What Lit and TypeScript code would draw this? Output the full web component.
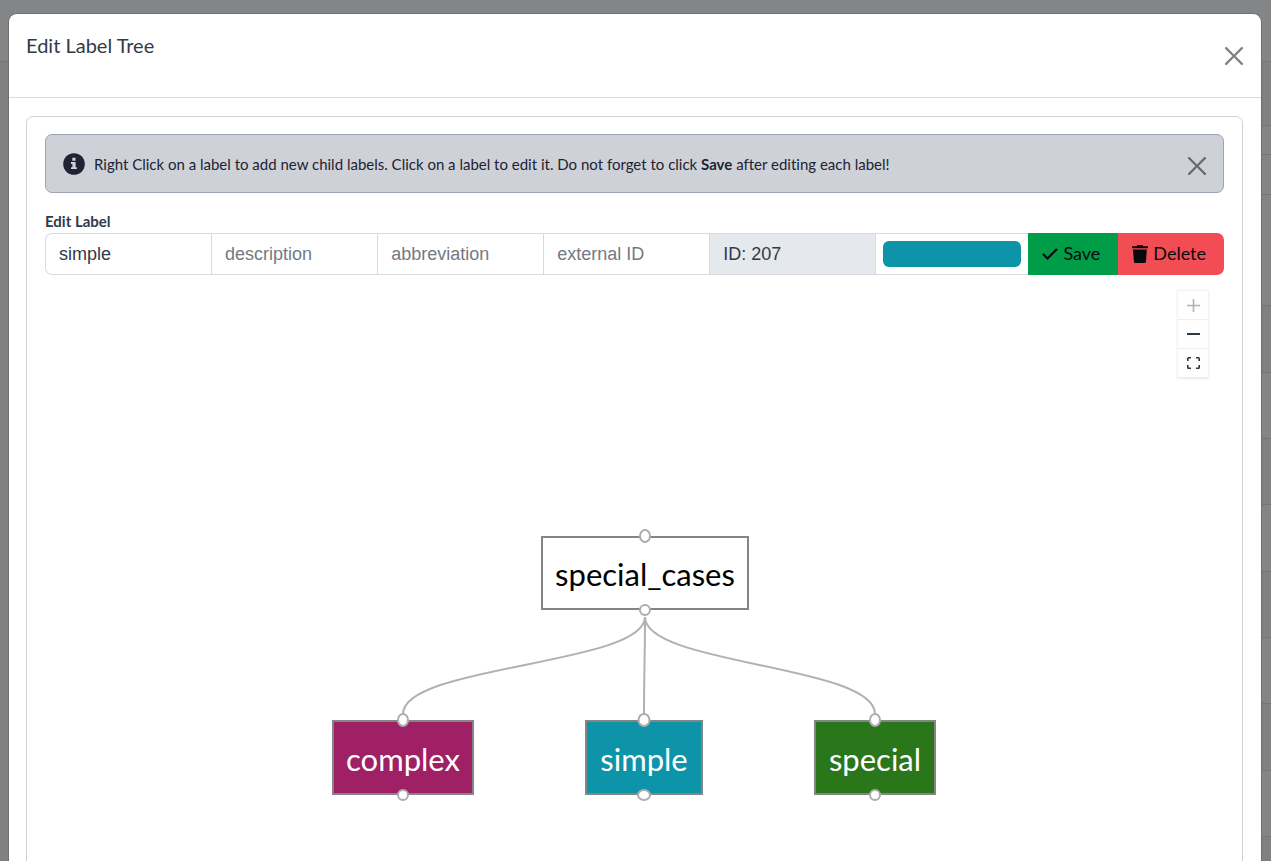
import { LitElement, html, css, svg } from "lit";
import { customElement, state } from "lit/decorators.js";
import { classMap } from "lit/directives/class-map.js";
import { styleMap } from "lit/directives/style-map.js";

interface TreeNode {
  name: string;
  x: number;
  y: number;
  width: number;
  height: number;
  fill: string;
  ink: string;
  topWidth: number;
  bottomWidth: number;
}

const NODES: TreeNode[] = [
  { name: "special_cases", x: 209, y: 0, width: 208, height: 74, fill: "#ffffff", ink: "#000000", topWidth: 12, bottomWidth: 12 },
  { name: "complex", x: 0, y: 184, width: 142, height: 75, fill: "#a02065", ink: "#ffffff", topWidth: 12, bottomWidth: 12 },
  { name: "simple", x: 253, y: 184, width: 118, height: 75, fill: "#0d94a8", ink: "#ffffff", topWidth: 13, bottomWidth: 14 },
  { name: "special", x: 482, y: 184, width: 122, height: 75, fill: "#2a761a", ink: "#ffffff", topWidth: 12, bottomWidth: 12 },
];

const closeIcon = html`<svg viewBox="0 0 16 16" width="18" height="18" aria-hidden="true">
  <path fill="currentColor" d="M.293.293a1 1 0 0 1 1.414 0L8 6.586 14.293.293a1 1 0 1 1 1.414 1.414L9.414 8l6.293 6.293a1 1 0 0 1-1.414 1.414L8 9.414l-6.293 6.293a1 1 0 0 1-1.414-1.414L6.586 8 .293 1.707a1 1 0 0 1 0-1.414z"/>
</svg>`;

@customElement("label-tree")
export class LabelTree extends LitElement {
  static styles = css`
    :host {
      display: flex;
      align-items: center;
      justify-content: center;
      position: relative;
      height: 781px;
    }
    .controls {
      position: absolute;
      top: 16px;
      right: 16px;
      display: flex;
      flex-direction: column;
      box-shadow: 0 0 2px 1px rgba(0, 0, 0, 0.08);
    }
    .control {
      display: flex;
      align-items: center;
      justify-content: center;
      box-sizing: border-box;
      width: 30px;
      height: 29px;
      padding: 0;
      border: 0;
      border-bottom: 1px solid #eeeeee;
      background: #fefefe;
      color: #2c3844;
    }
    .control:disabled {
      color: #b0b2b5;
    }
    .stage {
      position: relative;
      flex: none;
      width: 605px;
      height: 259px;
    }
    .edges {
      position: absolute;
      inset: 0;
      overflow: visible;
    }
    .edge {
      fill: none;
      stroke: #b1b1b5;
      stroke-width: 2;
    }
    .node {
      position: absolute;
      display: flex;
      align-items: center;
      justify-content: center;
      box-sizing: border-box;
      padding-top: 2px;
      border: 2px solid #858585;
      font: 31px/40px Lato, sans-serif;
    }
    .handle {
      position: absolute;
      left: 50%;
      box-sizing: border-box;
      border: 2px solid #adadad;
      border-radius: 50%;
      background: #ffffff;
      transform: translate(-50%, -50%);
    }
    .top {
      top: -2px;
      height: 14px;
    }
    .bottom {
      top: calc(100% + 2px);
      height: 12px;
    }
  `;

  private edge(child: TreeNode) {
    const x1 = 313;
    const x2 = child.x + child.width / 2;
    return svg`<path class="edge" d="M${x1} 81 C${x1} 129 ${x2} 129 ${x2} 178" />`;
  }

  render() {
    return html`
      <div class="controls">
        <button class="control" aria-label="Zoom in" disabled>
          <svg width="13" height="13" viewBox="0 0 13 13"><path d="M6.5 0v13M0 6.5h13" stroke="currentColor" stroke-width="1.6" /></svg>
        </button>
        <button class="control" aria-label="Zoom out">
          <svg width="13" height="13" viewBox="0 0 13 13"><path d="M0 6h13" stroke="currentColor" stroke-width="2" /></svg>
        </button>
        <button class="control" aria-label="Fit view">
          <svg width="13" height="12" viewBox="0 0 13 12"><path d="M4 .8H1.6Q.8.8.8 1.6V4M9 .8h2.4q.8 0 .8.8V4M4 11.2H1.6q-.8 0-.8-.8V8M9 11.2h2.4q.8 0 .8-.8V8" fill="none" stroke="currentColor" stroke-width="1.6" /></svg>
        </button>
      </div>
      <div class="stage">
        <svg class="edges" width="605" height="259" viewBox="0 0 605 259">${NODES.slice(1).map((n) => this.edge(n))}</svg>
        ${NODES.map(
          (n) => html`<div
            class="node"
            style=${styleMap({ left: `${n.x}px`, top: `${n.y}px`, width: `${n.width}px`, height: `${n.height}px`, background: n.fill, color: n.ink })}
          >
            <span>${n.name}</span>
            <span class="handle top" style=${styleMap({ width: `${n.topWidth}px` })}></span>
            <span class="handle bottom" style=${styleMap({ width: `${n.bottomWidth}px` })}></span>
          </div>`
        )}
      </div>
    `;
  }
}

@customElement("app-root")
export class AppRoot extends LitElement {
  @state() private noticeOpen = true;

  private bands = [62, 64, 29, 40, 111, 67, 66, 66, 67, 66, 66, 67, 66, 66];

  static styles = css`
    :host {
      display: grid;
      height: 100vh;
      overflow: hidden;
      background: #7f8081;
      color: #323a49;
      font: 15px/24px Lato, sans-serif;
      font-variant-ligatures: none;
    }
    .backdrop,
    .dialog {
      grid-area: 1 / 1;
      min-height: 0;
    }
    .band {
      box-sizing: border-box;
      margin-left: 8px;
      border-bottom: 1px solid #747577;
      background: #848586;
    }
    .band:first-child {
      margin-left: 0;
    }
    .shade {
      background: #7f8082;
    }
    .dialog {
      margin: 13px 9px 0 8px;
      border: 1px solid #6d6e70;
      border-bottom: 0;
      border-radius: 9px 9px 0 0;
      background: #ffffff;
      overflow: hidden;
    }
    .header {
      display: flex;
      align-items: center;
      justify-content: space-between;
      box-sizing: border-box;
      height: 84px;
      padding: 0 18px 0 17px;
      border-bottom: 1px solid #d8dadd;
    }
    .title {
      margin: 0 0 22px;
      font-size: 20px;
      line-height: 24px;
      font-weight: 400;
    }
    .close {
      display: flex;
      padding: 0;
      border: 0;
      background: none;
      color: #7f8082;
    }
    .card {
      margin: 18px 18px 18px 17px;
      padding: 17px 18px;
      border: 1px solid #d0d2d3;
      border-radius: 7px;
    }
    .notice {
      display: flex;
      align-items: center;
      gap: 9px;
      box-sizing: border-box;
      height: 59px;
      padding: 0 17px;
      border: 1px solid #9da5b1;
      border-radius: 7px;
      background: #ced2d8;
      color: #212233;
    }
    .message {
      flex: 1;
    }
    .notice .close {
      color: #696b6f;
      padding-top: 4px;
    }
    .caption {
      display: block;
      padding: 18px 0 2px;
      line-height: 20px;
      font-weight: 700;
    }
    .group {
      display: flex;
      height: 42px;
    }
    .field {
      flex: 1 1 0;
      min-width: 0;
      box-sizing: border-box;
      padding: 0 13px;
      border: 1px solid #d8dbe0;
      border-right-width: 0;
      border-radius: 0;
      background: #ffffff;
      color: #323a49;
      font: 18px "Liberation Sans", sans-serif;
    }
    .field::placeholder {
      color: #757982;
      opacity: 1;
    }
    .first {
      border-radius: 7px 0 0 7px;
    }
    .field:disabled {
      background: #e5e8ed;
      opacity: 1;
    }
    .color {
      flex: none;
      width: 153px;
      height: 100%;
      padding: 7px;
    }
    .color::-webkit-color-swatch-wrapper {
      padding: 0;
    }
    .color::-webkit-color-swatch {
      border: 0;
      border-radius: 6px;
    }
    .action {
      display: flex;
      align-items: center;
      gap: 5px;
      box-sizing: border-box;
      padding: 0 18px 1px 14px;
      border: 0;
      color: #080a0c;
      font: 18px/27px Lato, sans-serif;
    }
    .save {
      background: #009d48;
    }
    .delete {
      border-radius: 0 7px 7px 0;
      background: #f24d55;
    }
  `;

  render() {
    return html`
      <div class="backdrop" aria-hidden="true">
        ${this.bands.map(
          (h, i) => html`<div class=${classMap({ band: true, shade: i % 2 === 1 && i !== 3 })} style=${styleMap({ height: `${h}px` })}></div>`
        )}
      </div>
      <section class="dialog" role="dialog" aria-labelledby="title">
        <header class="header">
          <h1 class="title" id="title">Edit Label Tree</h1>
          <button class="close" aria-label="Close">${closeIcon}</button>
        </header>
        <div class="card">
          ${this.noticeOpen
            ? html`<div class="notice">
                <svg width="22" height="22" viewBox="0 0 22 22" aria-hidden="true">
                  <circle cx="11" cy="11" r="10.8" fill="currentColor" />
                  <path d="M9.300 4.800h3.200v2.900H9.300zM8 9h4.600v5.200h1.300v1.900H8v-1.900h1.400v-3.300H8z" fill="#ced2d8" />
                </svg>
                <span class="message"
                  >Right Click on a label to add new child labels. Click on a label to edit it. Do not forget to click <b>Save</b> after editing each label!</span
                >
                <button class="close" aria-label="Dismiss" @click=${() => (this.noticeOpen = false)}>${closeIcon}</button>
              </div>`
            : null}
          <label class="caption" for="name">Edit Label</label>
          <div class="group">
            <input class="field first" id="name" .value=${"simple"} />
            <input class="field" placeholder="description" aria-label="description" />
            <input class="field" placeholder="abbreviation" aria-label="abbreviation" />
            <input class="field" placeholder="external ID" aria-label="external ID" />
            <input class="field" .value=${"ID: 207"} disabled aria-label="ID" />
            <input class="field color" type="color" .value=${"#0d94a8"} aria-label="Colour" />
            <button class="action save">
              <svg width="16" height="14" viewBox="0 0 16 14" aria-hidden="true"><path d="M1 7l4.500 4.500L15 2" fill="none" stroke="currentColor" stroke-width="2.200" /></svg>
              Save
            </button>
            <button class="action delete">
              <svg width="16" height="18" viewBox="0 0 16 18" aria-hidden="true">
                <path fill="currentColor" d="M0 1.300h4.700L5.300 0h5.200l.6 1.300H16v2H0zM1 4.400h13.800L14 16.500Q13.800 18 12.500 18H3.300Q2 18 1.900 16.500z" />
              </svg>
              Delete
            </button>
          </div>
          <label-tree></label-tree>
        </div>
      </section>
    `;
  }
}
